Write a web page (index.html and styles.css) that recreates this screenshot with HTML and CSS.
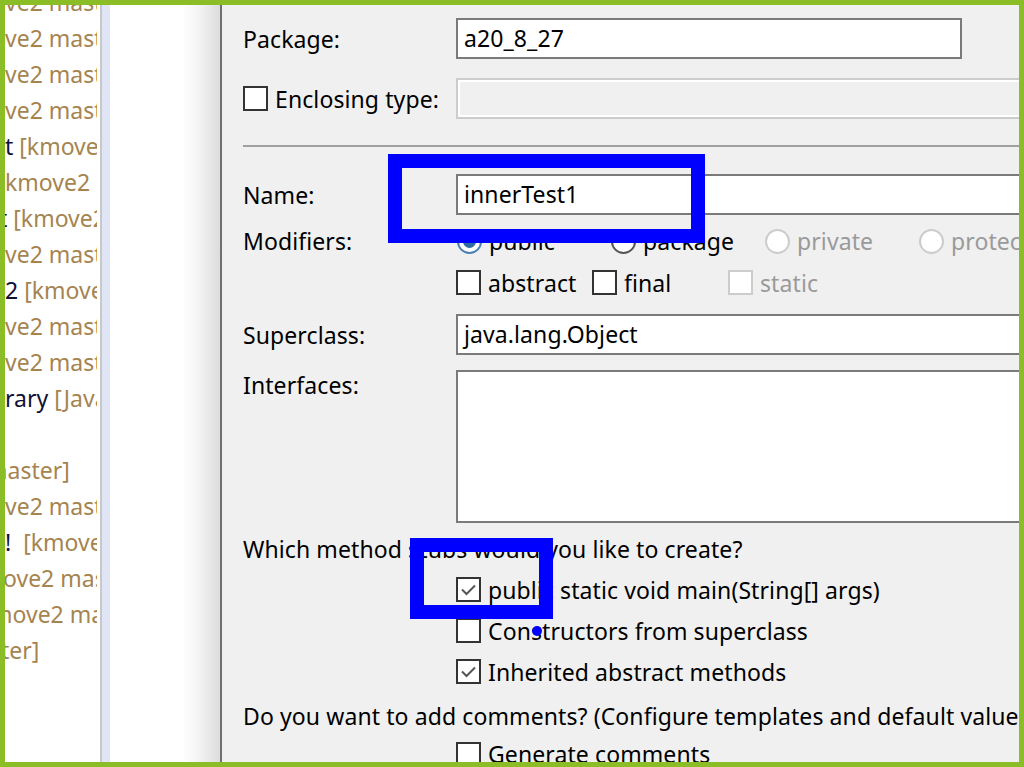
FILE: index.html
```html
<!DOCTYPE html>
<html>
<head>
<meta charset="utf-8">
<link rel="stylesheet" href="styles.css">
</head>
<body>
<div class="frame">
  <div class="tree">
    <div class="tree-clip">
      <div class="trow first"><span class="dec">ve2 master]</span></div>
      <div class="trow"><span class="dec">ve2 master]</span></div>
      <div class="trow"><span class="dec">ve2 master]</span></div>
      <div class="trow"><span class="dec">ve2 master]</span></div>
      <div class="trow"><span class="nm">t</span> <span class="dec">[kmove2 master]</span></div>
      <div class="trow"><span class="dec">kmove2 master]</span></div>
      <div class="trow sh6"><span class="nm">t</span> <span class="dec">[kmove2 master]</span></div>
      <div class="trow"><span class="dec">ve2 master]</span></div>
      <div class="trow"><span class="nm">2</span> <span class="dec">[kmove2 master]</span></div>
      <div class="trow"><span class="dec">ve2 master]</span></div>
      <div class="trow"><span class="dec">ve2 master]</span></div>
      <div class="trow"><span class="nm">rary</span> <span class="dec">[Java</span></div>
      <div class="trow"></div>
      <div class="trow sh19"><span class="dec">master]</span></div>
      <div class="trow"><span class="dec">ve2 master]</span></div>
      <div class="trow"><span class="nm">!</span>&nbsp; <span class="dec">[kmove2 master]</span></div>
      <div class="trow sh2"><span class="dec">ove2 master]</span></div>
      <div class="trow sh14"><span class="dec">move2 master]</span></div>
      <div class="trow sh4"><span class="dec">ter]</span></div>
    </div>
  </div>
  <div class="vline"></div>
  <div class="strip"></div>
  <div class="editor"></div>
  <div class="darkline"></div>
  <div class="dialog">
    <div class="content">
      <div class="row r-package">
        <div class="lbl">Package:</div>
        <div class="field pkg">a20_8_27</div>
      </div>
      <div class="row r-enclosing">
        <div class="lbl cbl"><span class="cb"></span>Enclosing type:</div>
        <div class="field disabled"></div>
      </div>
      <div class="sep"></div>
      <div class="row r-name">
        <div class="lbl">Name:</div>
        <div class="field">innerTest1</div>
      </div>
      <div class="row r-mod">
        <div class="lbl">Modifiers:</div>
        <div class="opts radios">
          <div class="opt"><span class="rb on"></span>public</div>
          <div class="opt"><span class="rb"></span>package</div>
          <div class="opt dis"><span class="rb"></span>private</div>
          <div class="opt dis"><span class="rb"></span>protected</div>
        </div>
      </div>
      <div class="row r-mod2">
        <div class="lbl"></div>
        <div class="opts checks">
          <div class="opt"><span class="cb"></span>abstract</div>
          <div class="opt"><span class="cb"></span>final</div>
          <div class="opt dis"><span class="cb"></span>static</div>
        </div>
      </div>
      <div class="row r-super">
        <div class="lbl">Superclass:</div>
        <div class="field">java.lang.Object</div>
      </div>
      <div class="row r-ifaces">
        <div class="lbl top">Interfaces:</div>
        <div class="field list"></div>
      </div>
      <div class="line r-which">Which method stubs would you like to create?</div>
      <div class="row r-cb first-cb">
        <div class="lbl"></div>
        <div class="opt"><span class="cb checked"><svg viewBox="0 0 21 21" width="21" height="21"><path d="M4 10.5 L8.5 15 L17 6.5" fill="none" stroke="#555" stroke-width="2"/></svg></span>public static void main(String[] args)</div>
      </div>
      <div class="row r-cb">
        <div class="lbl"></div>
        <div class="opt"><span class="cb"></span>Constructors from superclass</div>
      </div>
      <div class="row r-cb">
        <div class="lbl"></div>
        <div class="opt"><span class="cb checked"><svg viewBox="0 0 21 21" width="21" height="21"><path d="M4 10.5 L8.5 15 L17 6.5" fill="none" stroke="#555" stroke-width="2"/></svg></span>Inherited abstract methods</div>
      </div>
      <div class="line r-comments">Do you want to add comments? (Configure templates and default value here)</div>
      <div class="row r-gen">
        <div class="lbl"></div>
        <div class="opt"><span class="cb"></span>Generate comments</div>
      </div>
    </div>
  </div>
  <div class="mark mark-name"></div>
  <div class="mark mark-main"></div>
  <div class="dot"></div>
</div>
</body>
</html>
```

FILE: styles.css
```css
* { box-sizing: border-box; }
html, body { margin: 0; padding: 0; }
body {
  font-family: "Noto Sans", Roboto, sans-serif;
  font-size: 23px;
  letter-spacing: 0.1px;
  color: #000;
  background: #8bbd26;
}
.frame {
  position: relative;
  width: 1024px;
  height: 767px;
  border: 5px solid #8bbd26;
  display: flex;
  overflow: hidden;
  background: #fff;
}
.tree {
  width: 95px;
  flex: none;
  background: #fff;
  padding-right: 3px;
  overflow: hidden;
  letter-spacing: 0;
}
.tree-clip {
  width: 92px;
  overflow: hidden;
}
.trow {
  height: 36px;
  line-height: 36px;
  white-space: nowrap;
}
.trow.first { margin-top: -21px; }
.trow.sh2 { margin-left: -2px; }
.trow.sh4 { margin-left: -4px; }
.trow.sh6 { margin-left: -6px; }
.trow.sh14 { margin-left: -14px; }
.trow.sh19 { margin-left: -19px; }
.dec { color: #a5844f; }
.nm { color: #111133; }
.vline { width: 2px; flex: none; background: #c8c8c8; }
.strip { width: 8px; flex: none; background: #dfe5f5; }
.editor {
  width: 110px;
  flex: none;
  background: linear-gradient(to right, #fff 0, #fff 72px, #f4f4f4 88px, #dcdcdc 110px);
}
.darkline { width: 2px; flex: none; background: #707070; }
.dialog {
  flex: 1;
  background: #f0f0f0;
  overflow: hidden;
  min-width: 0;
}
.content {
  width: 900px;
  padding-left: 21px;
  padding-top: 13px;
}
.row {
  display: grid;
  grid-template-columns: 213px 1fr;
  align-items: center;
}
.lbl { white-space: nowrap; }
.lbl.top { align-self: start; line-height: 30px; }
.cbl { display: flex; align-items: center; }
.cbl .cb { margin-right: 7px; }
.field {
  height: 41px;
  border: 2px solid #7a7a7a;
  background: #fff;
  padding-left: 6px;
  line-height: 37px;
  white-space: nowrap;
}
.field.pkg { width: 506px; }
.field.disabled {
  border-color: #cccccc;
  box-shadow: inset 0 0 0 2px #fff;
  background: #f0f0f0;
}
.field.list { height: 153px; }
.r-package { height: 41px; }
.r-enclosing { height: 41px; margin-top: 19px; }
.sep { height: 2px; background: #a0a0a0; margin-top: 26px; }
.r-name { height: 41px; margin-top: 27px; }
.r-mod { height: 42px; margin-top: 5px; }
.r-mod2 { height: 41px; }
.r-super { height: 41px; margin-top: 11px; }
.r-ifaces { height: 153px; margin-top: 15px; align-items: start; }
.line { height: 30px; line-height: 30px; white-space: nowrap; }
.r-which { margin-top: 11px; }
.r-cb { height: 41px; }
.r-cb.first-cb { margin-top: 5px; }
.r-comments { margin-top: 9px; }
.r-gen { height: 42px; margin-top: 2px; }
.opts { display: flex; }
.radios .opt { width: 154px; }
.checks .opt { width: 136px; }
.opt {
  display: flex;
  align-items: center;
  white-space: nowrap;
}
.opt.dis { color: #9a9a9a; }
.cb {
  width: 25px;
  height: 25px;
  flex: none;
  border: 2px solid #333;
  background: #fff;
  margin-right: 7px;
  display: inline-flex;
  align-items: center;
  justify-content: center;
}
.opt.dis .cb { border-color: #cccccc; }
.rb {
  width: 25px;
  height: 25px;
  flex: none;
  border-radius: 50%;
  border: 2px solid #555;
  background: #fff;
  margin-right: 7px;
  margin-left: 1px;
  position: relative;
}
.opt.dis .rb { border-color: #cccccc; }
.rb.on { border-color: #4a7fb0; }
.rb.on::after {
  content: "";
  position: absolute;
  left: 4px; top: 4px;
  width: 13px; height: 13px;
  border-radius: 50%;
  background: #2f6aa3;
}
.mark {
  position: absolute;
  border: 14px solid #0000ff;
}
.mark-name { left: 383px; top: 149px; width: 317px; height: 89px; }
.mark-main { left: 405px; top: 533px; width: 143px; height: 81px; }
.dot {
  position: absolute;
  left: 527px; top: 621px;
  width: 10px; height: 10px;
  border-radius: 50%;
  background: #0000ff;
}
```
